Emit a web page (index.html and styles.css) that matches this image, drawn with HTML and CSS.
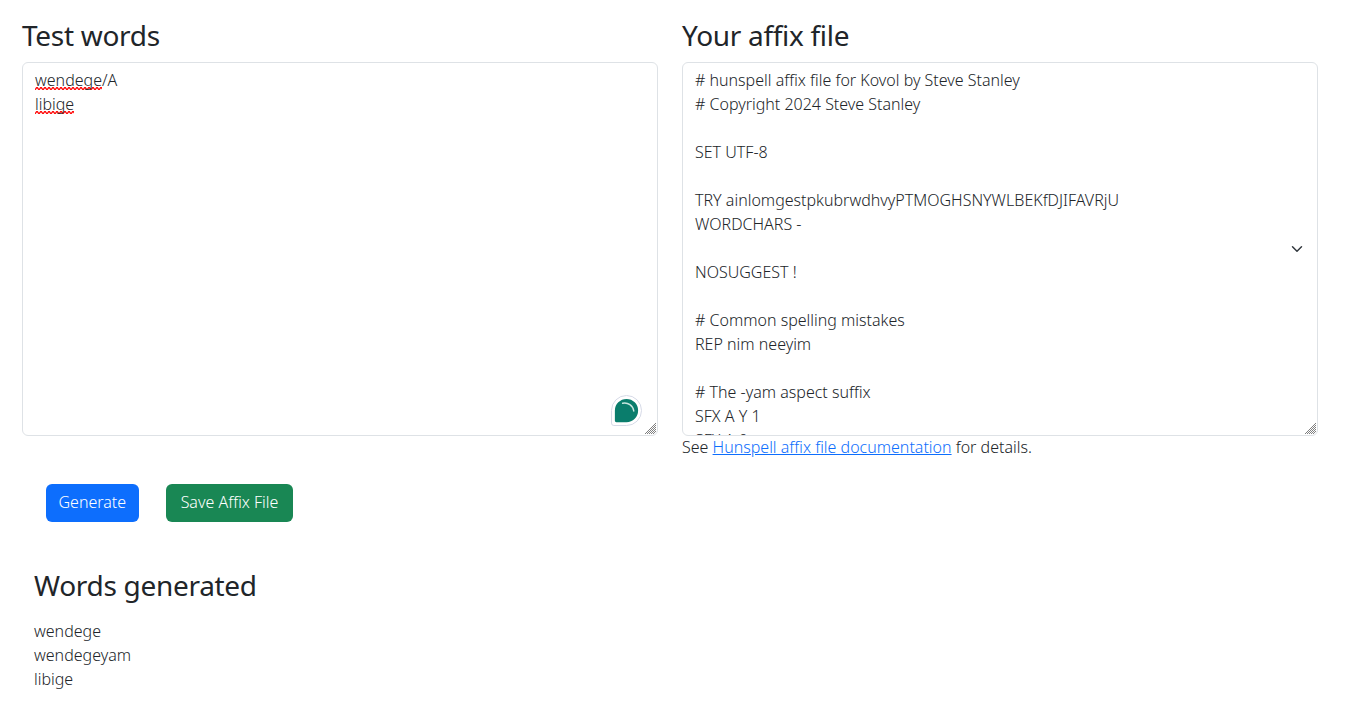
FILE: index.html
```html
<!DOCTYPE html>
<html lang="en">

<head>
  <meta charset="UTF-8">
  <meta name="viewport" content="width=device-width, initial-scale=1.0">
  <title>Affix file tester</title>
  <link rel="stylesheet" href="styles.css">
</head>

<body>
  <main class="page">
    <div class="columns">
      <section class="col">
        <h3>Test words</h3>
        <div class="field">
          <div class="box box--words" contenteditable="true" spellcheck="false"><span class="typo">wendege</span>/A<br><span class="typo">libige</span></div>
          <svg class="assistant" width="31" height="31" viewBox="0 0 32 32" aria-hidden="true">
            <path d="M16 .5a15.500 15.500 0 0 1 0 31H3A2.500 2.500 0 0 1 .5 29V16A15.500 15.500 0 0 1 16 .5z" fill="#fff" stroke="#d5d9e6" />
            <path d="M16 4a12 12 0 0 1 0 24H5.500A1.500 1.500 0 0 1 4 26.500V16A12 12 0 0 1 16 4z" fill="#0a7d6c" />
            <path d="M12 8.500a9.500 9.500 0 0 1 11.500 8" fill="none" stroke="#c8e6df" stroke-width="1.500" stroke-linecap="round" />
          </svg>
        </div>
      </section>
      <section class="col">
        <h3>Your affix file</h3>
        <textarea class="box box--affix" spellcheck="false"># hunspell affix file for Kovol by Steve Stanley
# Copyright 2024 Steve Stanley

SET UTF-8

TRY ainlomgestpkubrwdhvyPTMOGHSNYWLBEKfDJIFAVRjU
WORDCHARS -

NOSUGGEST !

# Common spelling mistakes
REP nim neeyim

# The -yam aspect suffix
SFX A Y 1
SFX A 0 yam .</textarea>
        <p class="hint">See <a href="#">Hunspell affix file documentation</a> for details.</p>
      </section>
    </div>
    <div class="actions">
      <button class="btn btn--primary">Generate</button>
      <button class="btn btn--success">Save Affix File</button>
    </div>
    <section class="results">
      <h3>Words generated</h3>
      <div>wendege</div>
      <div>wendegeyam</div>
      <div>libige</div>
    </section>
  </main>
</body>

</html>
```

FILE: styles.css
```css
* {
  box-sizing: border-box;
}

body {
  margin: 0;
  font-family: 'Noto Sans', 'Open Sans', sans-serif;
  font-size: 16px;
  font-weight: 300;
  line-height: 24px;
  color: #212529;
  background: #fff;
}

.page {
  width: 1320px;
  margin-left: 10px;
  padding: 0 12px;
}

.columns {
  display: grid;
  grid-template-columns: 636px 636px;
  gap: 24px;
}

h3 {
  margin: 0 0 9px;
  font-size: 28px;
  font-weight: 400;
  line-height: 33.6px;
  letter-spacing: -0.3px;
}

.col {
  padding-top: 19px;
}

.field {
  position: relative;
}

.box {
  display: block;
  width: 100%;
  height: 374px;
  padding: 5px 12px 6px;
  border: 1px solid #dee2e6;
  border-radius: 6px;
  font: inherit;
  color: #212529;
  background-color: #fff;
  outline: none;
  overflow: hidden;
  resize: vertical;
}

.box::-webkit-resizer {
  background: url("data:image/svg+xml,%3csvg xmlns='http://www.w3.org/2000/svg' viewBox='0 0 15 15'%3e%3cpath fill='none' stroke='%23808080' d='M14 3 3 14M14 5 5 14M14 7 7 14M14 9 9 14M14 11 11 14'/%3e%3c/svg%3e") no-repeat;
}

.box--affix {
  padding-right: 36px;
  background-image: url("data:image/svg+xml,%3csvg xmlns='http://www.w3.org/2000/svg' viewBox='0 0 16 16'%3e%3cpath fill='none' stroke='%23343a40' stroke-linecap='round' stroke-linejoin='round' stroke-width='2' d='m2 5 6 6 6-6'/%3e%3c/svg%3e");
  background-repeat: no-repeat;
  background-position: right 12px center;
  background-size: 16px 12px;
}

.typo {
  background: url("data:image/svg+xml,%3csvg xmlns='http://www.w3.org/2000/svg' width='4' height='3'%3e%3cpath fill='none' stroke='%23f00' stroke-width='1.300' d='M0 2.500C1 2.500 1 .5 2 .5S3 2.500 4 2.500'/%3e%3c/svg%3e") repeat-x left 0 bottom 1px;
}

.assistant {
  position: absolute;
  right: 16px;
  bottom: 10px;
}

.hint {
  margin: -1px 0 0;
}

a {
  color: #0d6efd;
}

.actions {
  display: flex;
  gap: 27px;
  padding: 25px 0 0 24px;
}

.btn {
  height: 38px;
  padding: 5px 11.5px 7px;
  border: 1px solid transparent;
  border-radius: 6px;
  font: inherit;
  color: #fff;
}

.btn--primary {
  background: #0d6efd;
}

.btn--success {
  padding: 5px 14px 7px;
  background: #198754;
}

.results {
  padding: 47px 0 0 12px;
}

.results h3 {
  margin-bottom: 17px;
}
```
